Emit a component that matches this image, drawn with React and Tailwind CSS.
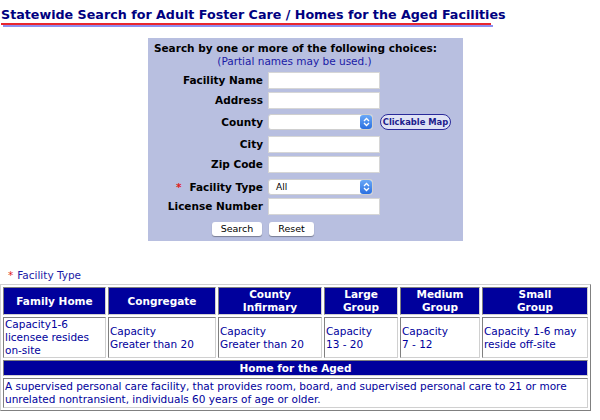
import { useState } from "react";

const font = { fontFamily: '"DejaVu Sans", Verdana, sans-serif' };

function TextBox() {
  return <input type="text" className="block w-[112px] h-[17px] bg-white border border-[#d6d6d6] outline-none" />;
}

function Stepper() {
  return (
    <span className="absolute right-0 top-0 h-full w-[12px] rounded-[3px] bg-gradient-to-b from-[#6aa8f7] to-[#2a6fe0] flex items-center justify-center">
      <svg width="7" height="10" viewBox="0 0 7 10" fill="none" stroke="white" strokeWidth="1.3">
        <path d="M1 4 L3.5 1.5 L6 4" />
        <path d="M1 6 L3.5 8.5 L6 6" />
      </svg>
    </span>
  );
}

function SelectBox({ value, width }) {
  return (
    <div className={`relative h-[16px] bg-white border border-[#cfcfcf] rounded-[3px] ${width}`}>
      <span className="absolute left-[7px] top-0 leading-[14px] text-[9px] text-black">{value}</span>
      <Stepper />
    </div>
  );
}

function Row({ label, required, children, className }) {
  return (
    <div className={`flex items-center gap-[5px] ${className}`}>
      <div className="w-[115px] text-right font-bold text-[10.5px] text-black leading-[13px]">
        {required && <span className="text-[#e01b1b] mr-[8px]">*</span>}
        {label}
      </div>
      {children}
    </div>
  );
}

export default function App() {
  const [name] = useState("");

  const heads = [
    { label: ["Family Home"], w: "w-[103px]" },
    { label: ["Congregate"], w: "w-[108px]" },
    { label: ["County", "Infirmary"], w: "w-[104px]" },
    { label: ["Large", "Group"], w: "w-[74px]" },
    { label: ["Medium", "Group"], w: "w-[80px]" },
    { label: ["Small", "Group"], w: "w-[106px]" },
  ];
  const caps = [
    ["Capacity1-6", "licensee resides", "on-site"],
    ["Capacity", "Greater than 20"],
    ["Capacity", "Greater than 20"],
    ["Capacity", "13 - 20"],
    ["Capacity", "7 - 12"],
    ["Capacity 1-6 may", "reside off-site"],
  ];

  return (
    <div className="w-[600px] h-[420px] bg-white overflow-hidden" style={font}>
      {/* title */}
      <div className="pt-[8px] pl-[1px]">
        <h1 className="text-[12.7px] font-bold text-[#000080] leading-[14px] whitespace-nowrap">
          Statewide Search for Adult Foster Care / Homes for the Aged Facilities
        </h1>
        <div className="mt-[1px] w-[490px] h-[2px] bg-[#e8262e]" />
        <div className="ml-[2px] w-[490px] h-[2px] bg-[#8d8ff0]" />
      </div>

      {/* search panel */}
      <div className="ml-[148px] mt-[11px] w-[315px] h-[203px] bg-[#b8bfe0] pt-[4px]">
        <p className="pr-[20px] text-center font-bold text-[10.5px] leading-[13px] text-black whitespace-nowrap">
          Search by one or more of the following choices:
        </p>
        <p className="pr-[22px] text-center text-[10.5px] leading-[13px] text-[#1a1aa6]">(Partial names may be used.)</p>

        <Row label="Facility Name" className="mt-[4px]">
          <TextBox />
        </Row>
        <Row label="Address" className="mt-[3px]">
          <TextBox />
        </Row>
        <Row label="County" className="mt-[5px]">
          <SelectBox value="" width="w-[105px]" />
          <button className="ml-[2px] h-[16px] w-[71px] rounded-full border-[1.5px] border-[#2a2a9a] bg-[#dfe2f5] text-[8.4px] font-bold text-[#1c1c8c] leading-[12px] whitespace-nowrap">
            Clickable Map
          </button>
        </Row>
        <Row label="City" className="mt-[6px]">
          <TextBox />
        </Row>
        <Row label="Zip Code" className="mt-[3px]">
          <TextBox />
        </Row>
        <Row label="Facility Type" required className="mt-[6px]">
          <SelectBox value="All" width="w-[105px]" />
        </Row>
        <Row label="License Number" className="mt-[3px]">
          <TextBox />
        </Row>
        <div className="mt-[7px] flex gap-[7px] pl-[64px]">
          <button className="w-[50px] h-[14px] rounded-[3px] bg-white shadow-[0_1px_1px_rgba(0,0,0,0.35)] text-[9.5px] leading-[14px] text-black">
            Search
          </button>
          <button className="w-[45px] h-[14px] rounded-[3px] bg-white shadow-[0_1px_1px_rgba(0,0,0,0.35)] text-[9.5px] leading-[14px] text-black">
            Reset
          </button>
        </div>
      </div>

      {/* legend */}
      <p className="mt-[28px] pl-[8px] text-[10.5px] leading-[13px] text-[#1a1aa6]">
        <span className="text-[#e01b1b] mr-[4px]">*</span>Facility Type
      </p>

      <table className="mt-[2px] w-[591px] border-separate border-spacing-[2px] border border-t-[#d0d0d0] border-l-[#d0d0d0] border-r-[#808080] border-b-[#808080] text-[10.5px]">
        <tbody>
          <tr>
            {heads.map((h) => (
              <td
                key={h.label.join()}
                className={`${h.w} h-[28px] bg-[#00009c] text-white font-bold text-center leading-[13px] border border-t-[#808080] border-l-[#808080] border-r-[#d0d0d0] border-b-[#d0d0d0]`}
              >
                {h.label.map((l) => (
                  <div key={l}>{l}</div>
                ))}
              </td>
            ))}
          </tr>
          <tr>
            {caps.map((c, i) => (
              <td
                key={i}
                className="h-[41px] px-[1px] align-middle text-[#00009c] leading-[13px] border border-t-[#808080] border-l-[#808080] border-r-[#d0d0d0] border-b-[#d0d0d0]"
              >
                {c.map((l) => (
                  <div key={l} className="whitespace-nowrap">{l}</div>
                ))}
              </td>
            ))}
          </tr>
          <tr>
            <td
              colSpan={6}
              className="h-[16px] bg-[#00009c] text-white font-bold text-center leading-[13px] border border-t-[#808080] border-l-[#808080] border-r-[#d0d0d0] border-b-[#d0d0d0]"
            >
              Home for the Aged
            </td>
          </tr>
          <tr>
            <td
              colSpan={6}
              className="h-[30px] px-[1px] text-[#00009c] leading-[13px] border border-t-[#808080] border-l-[#808080] border-r-[#d0d0d0] border-b-[#d0d0d0]"
            >
              A supervised personal care facility, that provides room, board, and supervised personal care to 21 or more
              unrelated nontransient, individuals 60 years of age or older.
              {name}
            </td>
          </tr>
        </tbody>
      </table>
    </div>
  );
}
